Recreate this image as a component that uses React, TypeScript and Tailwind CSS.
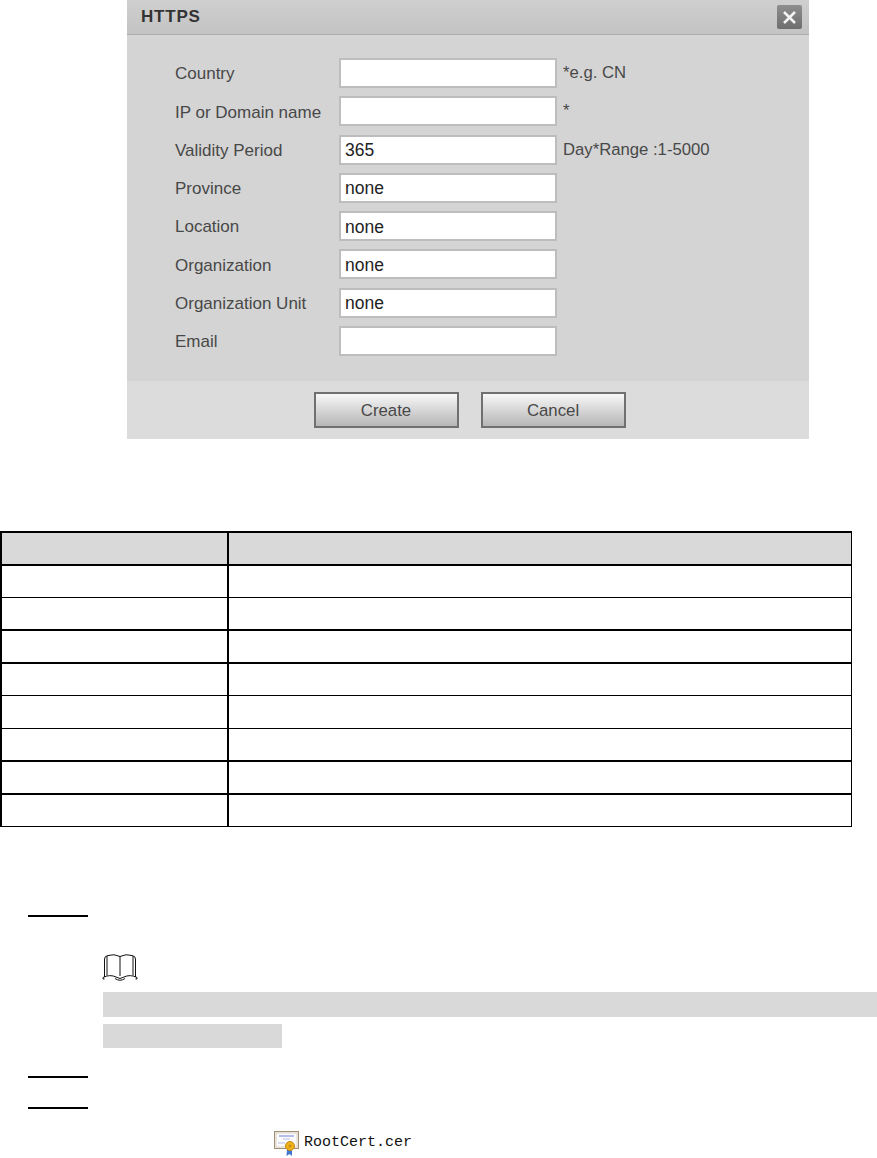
const fields = [
  { label: 'Country', value: '', hint: '*e.g. CN' },
  { label: 'IP or Domain name', value: '', hint: '*' },
  { label: 'Validity Period', value: '365', hint: 'Day*Range :1-5000' },
  { label: 'Province', value: 'none', hint: '' },
  { label: 'Location', value: 'none', hint: '' },
  { label: 'Organization', value: 'none', hint: '' },
  { label: 'Organization Unit', value: 'none', hint: '' },
  { label: 'Email', value: '', hint: '' },
];

// the ruling in the source page alternates between 1px and 2px lines
const rows = [
  'h-[33px] border-t-2 bg-[#d9d9d9]',
  'h-[33px] border-t-2',
  'h-[32px] border-t',
  'h-[33px] border-t-2',
  'h-[33px] border-t-2',
  'h-[33px] border-t',
  'h-[32px] border-t',
  'h-[33px] border-t-2',
  'h-[34px] border-t-2 border-b',
];

function BookIcon() {
  return (
    <svg width="36" height="28" viewBox="0 0 36 28" fill="none" stroke="#111" strokeWidth="1">
      <path d="M2.5 24V6Q2.5 3 6 2.5Q12 .5 18 3.5Q24 .5 30 2.5Q33.5 3 33.5 6V24" />
      <path d="M5 22.5V3M18 3.5V23M31 22.5V3" />
      <path d="M1 26V24.5Q8 21 14 24Q18 27 22 24Q28 21 35 24.5V26" />
      <path d="M1 26H2.5M33.5 26H35M13 25.5Q18 29 23 25.5" />
    </svg>
  );
}

function CertIcon() {
  return (
    <svg width="26" height="25" viewBox="0 0 26 25">
      <rect x="0.5" y="0.5" width="24" height="17" fill="#f4f2ec" stroke="#a08f74" />
      <rect x="2" y="2" width="21" height="14" fill="#fbfbfd" stroke="#d8d2c4" />
      <path d="M5 5H20" stroke="#6d7fd0" strokeWidth="1" />
      <path d="M9 8H16M4 12H11" stroke="#b6bfe0" strokeWidth="1" />
      <path d="M13 18L12.5 25L15.5 23L18 25L18 18Z" fill="#3f78d0" />
      <circle cx="16" cy="15" r="4.5" fill="#eeb21c" stroke="#c4860f" />
      <circle cx="16" cy="15" r="1.5" fill="#c98d14" />
    </svg>
  );
}

function StepMark() {
  return <div className="ml-[28px] w-[60px] border-t-2 border-black"></div>;
}

export default function App() {
  return (
    <div className="w-[877px] h-[1158px] overflow-hidden bg-white font-['Liberation_Sans',sans-serif]">
      {/* Dialog */}
      <div className="ml-[127px] w-[682px] h-[439px] flex flex-col bg-[#d4d4d4]">
        <div className="h-[35px] shrink-0 flex items-center justify-between pl-[14px] pr-[7px] bg-gradient-to-b from-[#cfcfcf] to-[#c3c3c3] border-b border-[#adadad]">
          <span className="text-[17px] font-bold tracking-[0.8px] text-[#333]">HTTPS</span>
          <div className="w-[25px] h-[24px] flex items-center justify-center rounded-[2px] bg-gradient-to-b from-[#8e8e8e] to-[#6e6e6e]">
            <svg width="15" height="15" viewBox="0 0 15 15" stroke="#f4f4f4" strokeWidth="2.5">
              <path d="M2 2L13 13M13 2L2 13" />
            </svg>
          </div>
        </div>

        <div className="flex-1 pt-[23px] pl-[48px] flex flex-col gap-[8.3px]">
          {fields.map((f) => (
            <div key={f.label} className="flex items-center h-[30px] text-[17px] text-[#484848]">
              <span className="w-[164px] pt-[2px]">{f.label}</span>
              <div className="w-[218px] h-[30px] pl-[4px] pt-[1px] flex items-center bg-white border-2 border-[#bdbdbd] text-[17.5px] text-[#222]">
                {f.value}
              </div>
              <span className="ml-[6px] pb-[1px] text-[16.7px]">{f.hint}</span>
            </div>
          ))}
        </div>

        <div className="h-[58px] shrink-0 flex justify-center gap-[22px] pt-[11px] pl-[3px] bg-[#dcdcdc]">
          <div className="w-[145px] h-[36px] pt-[1px] flex items-center justify-center border-2 border-[#707070] bg-gradient-to-b from-[#f8f8f8] to-[#b6b6b6] text-[16.8px] text-[#484848]">Create</div>
          <div className="w-[145px] h-[36px] pt-[1px] flex items-center justify-center border-2 border-[#707070] bg-gradient-to-b from-[#f8f8f8] to-[#b6b6b6] text-[16.8px] text-[#484848]">Cancel</div>
        </div>
      </div>

      {/* Blank table */}
      <div className="mt-[92px] w-[852px] flex flex-col">
        {rows.map((r, i) => (
          <div key={i} className={`${r} flex border-black`}>
            <div className="w-[229px] border-x-2 border-black"></div>
            <div className="flex-1 border-r border-black"></div>
          </div>
        ))}
      </div>

      {/* Steps */}
      <div className="mt-[88px]"><StepMark /></div>
      <div className="ml-[102px] mt-[36px]"><BookIcon /></div>
      <div className="ml-[103px] mt-[11px] h-[25px] bg-[#d9d9d9]"></div>
      <div className="ml-[103px] mt-[7px] w-[179px] h-[24px] bg-[#d9d9d9]"></div>
      <div className="mt-[28px]"><StepMark /></div>
      <div className="mt-[29px]"><StepMark /></div>
      <div className="ml-[274px] mt-[22px] flex items-center gap-[4px]">
        <CertIcon />
        <span className="text-[15px] leading-none font-['Liberation_Mono',monospace] text-[#111] pb-[3px]">RootCert.cer</span>
      </div>
    </div>
  );
}
